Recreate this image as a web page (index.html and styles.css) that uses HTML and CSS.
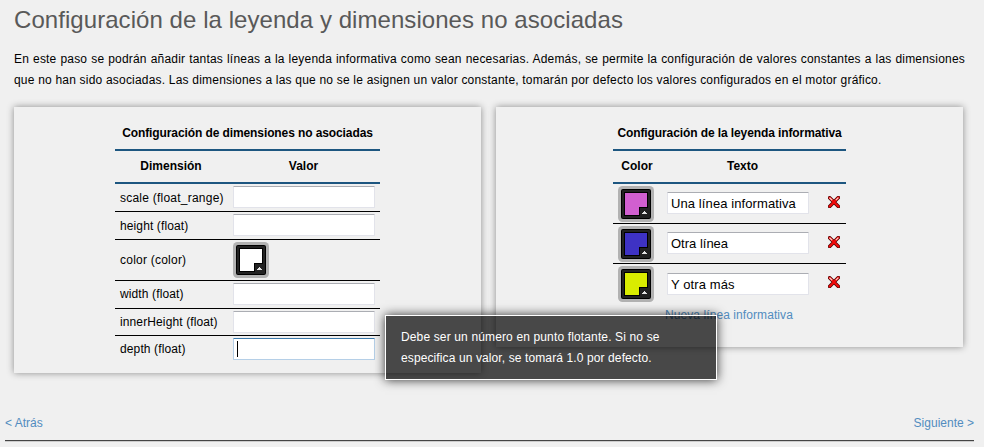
FILE: index.html
```html
<!DOCTYPE html>
<html lang="es">
<head>
<meta charset="utf-8">
<title>Configuración de la leyenda</title>
<link rel="stylesheet" href="styles.css">
</head>
<body>
<svg class="defs" width="0" height="0" aria-hidden="true">
  <symbol id="cross" viewBox="0 0 12 12" overflow="visible">
    <path d="M1.6 1.8L10.4 10.6M10.4 1.6L1.6 10.4" stroke="#500404" stroke-width="3.6" stroke-linecap="round"/>
    <path d="M1.6 1.8L10.4 10.6M10.4 1.6L1.6 10.4" stroke="#f40c0c" stroke-width="2.1" stroke-linecap="round"/>
    <path d="M1.5 1.7L4.2 4.3M7.8 4.1L10.4 1.6" fill="none" stroke="#ffd0c8" stroke-width="1.2"/>
  </symbol>
  <symbol id="swatch" viewBox="0 0 36 36">
    <rect width="36" height="36" rx="4.5" fill="#b2b2b2"/>
    <rect x="3" y="3" width="30" height="30" rx="2" fill="#000"/>
    <rect x="4" y="4" width="28" height="28" rx="1" fill="#222"/>
    <rect x="6" y="6" width="24" height="24" fill="#000"/>
    <rect x="7" y="7" width="22" height="22" fill="currentColor"/>
    <path d="M21 21h9v9h-9z" fill="#000"/>
    <path d="M22 22h9v9h-9z" fill="#222"/>
    <path d="M26 25h1v1h1v1h1v1h-5v-1h1v-1h1z" fill="#e4e4e4"/>
  </symbol>
</svg>
<main>
  <h1>Configuración de la leyenda y dimensiones no asociadas</h1>
  <p class="intro">En este paso se podrán añadir tantas líneas a la leyenda informativa como sean necesarias. Además, se permite la configuración de valores constantes a las dimensiones que no han sido asociadas. Las dimensiones a las que no se le asignen un valor constante, tomarán por defecto los valores configurados en el motor gráfico.</p>
  <div class="panels">
    <section class="panel dims">
      <div class="table">
        <h2>Configuración de dimensiones no asociadas</h2>
        <div class="head"><b>Dimensión</b><b>Valor</b></div>
        <div class="row"><label class="wide">scale (float_range)</label><div class="field"></div></div>
        <div class="row"><label>height (float)</label><div class="field"></div></div>
        <div class="row tall"><label class="wide">color (color)</label><svg class="swatch white"><use href="#swatch"/></svg></div>
        <div class="row low"><label>width (float)</label><div class="field"></div></div>
        <div class="row low short"><label>innerHeight (float)</label><div class="field"></div></div>
        <div class="row low last"><label>depth (float)</label><div class="field focus"><i class="caret"></i></div></div>
      </div>
    </section>
    <section class="panel legend">
      <div class="table">
        <h2>Configuración de la leyenda informativa</h2>
        <div class="head"><b>Color</b><b>Texto</b></div>
        <div class="row"><svg class="swatch pink"><use href="#swatch"/></svg><div class="field spaced">Una línea informativa</div><svg class="del"><use href="#cross"/></svg></div>
        <div class="row"><svg class="swatch blue"><use href="#swatch"/></svg><div class="field">Otra línea</div><svg class="del"><use href="#cross"/></svg></div>
        <div class="row last"><svg class="swatch lime"><use href="#swatch"/></svg><div class="field spaced">Y otra más</div><svg class="del"><use href="#cross"/></svg></div>
        <a class="new">Nueva línea informativa</a>
      </div>
    </section>
  </div>
</main>
<nav><a class="prev">&lt; Atrás</a><a class="next">Siguiente &gt;</a></nav>
<div class="tip"><div class="tip1">Debe ser un número en punto flotante. Si no se</div><div class="tip2">especifica un valor, se tomará 1.0 por defecto.</div></div>
</body>
</html>
```
FILE: styles.css
```css
* { box-sizing: border-box; }
body { margin: 0; height: 447px; overflow: hidden; background: #f0f0f0; color: #000; font: 12px/21px "Liberation Sans", Arial, sans-serif; }
.defs { display: block; height: 0; }
main { padding: 0 19px 0 14px; height: 407px; }
h1 { margin: 0; height: 49px; font-size: 24px; font-weight: 400; line-height: 39px; letter-spacing: .06px; color: #595959; white-space: nowrap; }
.intro { margin: 0 0 16px; height: 42px; text-align: justify; letter-spacing: .2px; }
.panels { display: flex; gap: 15px; align-items: flex-start; }
.panel { width: 467px; background: #f0f0f0; box-shadow: 0 0 7px rgba(0,0,0,.42); padding-top: 14px; white-space: nowrap; }
.dims { height: 266px; padding-left: 101px; }
.legend { height: 240px; padding-left: 117px; }
.dims .table { width: 265px; }
.legend .table { width: 233px; }
h2 { margin: 0; height: 30px; line-height: 24px; font-size: 12px; letter-spacing: -.1px; text-align: center; border-bottom: 2px solid #1d5680; }
.head { display: grid; height: 33px; line-height: 31px; text-align: center; border-bottom: 2px solid #1d5680; }
.dims .head { grid-template-columns: 112px 153px; }
.legend .head { grid-template-columns: 48px 163px 22px; }
.row { display: grid; grid-template-columns: 113px 142px; align-items: start; height: 28px; padding: 2px 0 0 5px; border-bottom: 1px solid #000; }
.row label { line-height: 24px; letter-spacing: .12px; }
.row label.wide { letter-spacing: .23px; }
.row.tall { height: 41px; }
.row.tall label { line-height: 36px; }
.row.low label { line-height: 22px; }
.row.short { height: 27px; }
.row.last { border-bottom: 0; }
.field { width: 142px; height: 22px; padding-left: 3px; background: #fff; border: 1px solid #e2e3ea; border-top-color: #abadb3; border-radius: 1px; font-size: 13px; line-height: 21px; }
.spaced { letter-spacing: .1px; }
.focus { border-color: #b5cfe7; border-top-color: #3d7bad; }
.caret { display: block; width: 1px; height: 16px; margin-top: 2px; background: #000; }
.swatch { display: block; width: 36px; height: 36px; }
.white { color: #fff; }
.pink { color: #d15fd0; }
.blue { color: #3e32c4; }
.lime { color: #d9ec00; }
.legend .row { grid-template-columns: 49px 161px 12px; height: 40px; }
.legend .field { margin-top: 6px; }
.legend .last .field { margin-top: 7px; }
.del { width: 12px; height: 12px; margin-top: 10px; }
a { color: #528cbf; }
.new { display: block; width: 130px; margin: 1px 0 0 52px; letter-spacing: .08px; }
nav { display: flex; justify-content: space-between; margin: 0 10px 0 5px; height: 34px; padding-top: 6px; border-bottom: 1px solid #444; box-shadow: 0 1px 0 #ccc; white-space: nowrap; }
.tip { position: absolute; left: 385px; top: 315px; width: 332px; height: 65px; padding: 11px 15px; border: 1px solid #fff; background: rgba(0,0,0,.7); box-shadow: 0 0 10px rgba(0,0,0,.8); color: #fff; white-space: nowrap; }
.tip1 { letter-spacing: .14px; }
.tip2 { letter-spacing: .11px; }
```
